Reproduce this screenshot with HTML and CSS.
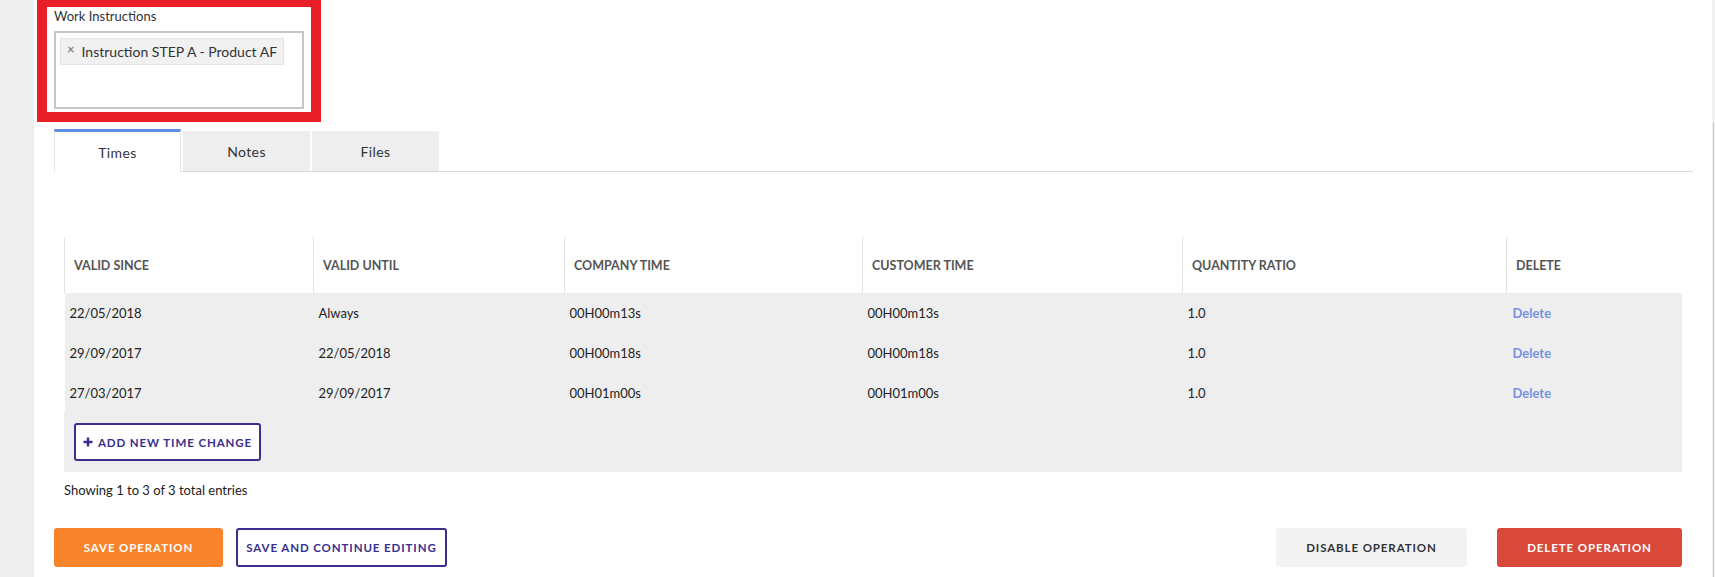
FILE: index.html
```html
<!DOCTYPE html>
<html>
<head>
<meta charset="utf-8">
<link rel="stylesheet" href="styles.css">
</head>
<body>
<div class="page">
  <div class="side-left"></div>
  <main class="main">
    <div class="field">
      <div class="highlight"></div>
      <label class="field-label">Work Instructions</label>
      <div class="select-box">
        <span class="tag"><span class="tag-x">×</span>Instruction STEP A - Product AF</span>
      </div>
    </div>

    <div class="tabs">
      <div class="tab active">Times</div>
      <div class="tab">Notes</div>
      <div class="tab">Files</div>
    </div>

    <div class="table-wrap">
      <table class="times">
        <colgroup>
          <col style="width:249px">
          <col style="width:251px">
          <col style="width:298px">
          <col style="width:320px">
          <col style="width:324px">
          <col>
        </colgroup>
        <thead>
          <tr>
            <th>VALID SINCE</th>
            <th>VALID UNTIL</th>
            <th>COMPANY TIME</th>
            <th>CUSTOMER TIME</th>
            <th>QUANTITY RATIO</th>
            <th>DELETE</th>
          </tr>
        </thead>
        <tbody>
          <tr>
            <td>22/05/2018</td><td>Always</td><td>00H00m13s</td><td>00H00m13s</td><td>1.0</td><td><a class="del">Delete</a></td>
          </tr>
          <tr>
            <td>29/09/2017</td><td>22/05/2018</td><td>00H00m18s</td><td>00H00m18s</td><td>1.0</td><td><a class="del">Delete</a></td>
          </tr>
          <tr>
            <td>27/03/2017</td><td>29/09/2017</td><td>00H01m00s</td><td>00H01m00s</td><td>1.0</td><td><a class="del">Delete</a></td>
          </tr>
        </tbody>
      </table>
      <div class="add-row">
        <button class="btn-add"><svg class="plus" viewBox="0 0 10 10" width="10" height="10"><path d="M5 0.5v9M0.5 5h9" stroke="#3a2f8f" stroke-width="2.4"/></svg>ADD NEW TIME CHANGE</button>
      </div>
      <div class="showing">Showing 1 to 3 of 3 total entries</div>
    </div>

    <div class="actions">
      <div class="actions-left">
        <button class="btn btn-orange">SAVE OPERATION</button>
        <button class="btn btn-outline">SAVE AND CONTINUE EDITING</button>
      </div>
      <div class="actions-right">
        <button class="btn btn-light">DISABLE OPERATION</button>
        <button class="btn btn-red">DELETE OPERATION</button>
      </div>
    </div>
  </main>
  <div class="side-right"><div class="scroll-line"></div></div>
</div>
</body>
</html>
```
FILE: styles.css
```css
* { box-sizing: border-box; }
html, body { margin: 0; padding: 0; }
body {
  font-family: "Lato", "Noto Sans", sans-serif;
  color: #222;
  background: #fff;
  width: 1715px;
  height: 577px;
  overflow: hidden;
}
.page {
  display: flex;
  height: 577px;
}
.side-left {
  width: 34px;
  background: #eeeeee;
  flex: none;
}
.side-right {
  width: 3px;
  flex: none;
  background: #f0f0f0;
  position: relative;
}
.scroll-line {
  position: absolute;
  left: 1px;
  top: 123px;
  bottom: 0;
  width: 1px;
  background: #c8c8c8;
}
.main {
  flex: 1;
  padding: 0 30px 0 20px;
}

/* field */
.field {
  position: relative;
  padding-top: 8px;
  width: 250px;
}
.highlight {
  position: absolute;
  left: -17px;
  top: -3px;
  width: 284px;
  height: 125px;
  border: 10px solid #e81f27;
  pointer-events: none;
}
.field-label {
  display: block;
  font-size: 13px;
  line-height: 16px;
  color: #333;
  margin-bottom: 7px;
}
.select-box {
  width: 250px;
  height: 78px;
  border: 2px solid #c6c6c6;
  padding: 5px 4px;
}
.tag {
  display: inline-flex;
  align-items: center;
  height: 27px;
  width: 224px;
  background: #f1f1f1;
  border: 1px solid #e4e4e4;
  padding-left: 6px;
  font-size: 14px;
  color: #333;
}
.tag-x {
  color: #888;
  font-weight: 700;
  font-size: 13px;
  margin-right: 7px;
  position: relative;
  top: -3px;
}

/* tabs */
.tabs {
  display: flex;
  gap: 2px;
  margin-top: 21px;
  margin-right: -11px;
  border-bottom: 1px solid #dcdcdc;
  height: 42px;
  align-items: flex-end;
}
.tab {
  width: 127px;
  height: 40px;
  background: #eeeeee;
  display: flex;
  align-items: center;
  justify-content: center;
  font-size: 14px;
  color: #333;
  letter-spacing: 0.4px;
}
.tab.active {
  height: 43px;
  margin-bottom: -1px;
  background: #fff;
  border-top: 3px solid #5b8ee0;
  border-left: 1px solid #e4e4e4;
  border-right: 1px solid #e4e4e4;
}

/* table */
.table-wrap {
  margin-left: 10px;
  margin-top: 65px;
}
.times {
  width: 100%;
  border-collapse: collapse;
  table-layout: fixed;
}
.times th {
  height: 56px;
  text-align: left;
  font-weight: 700;
  font-size: 12.5px;
  color: #555;
  padding: 0 0 0 9px;
  border-left: 1px solid #e2e2e2;
  background: #fff;
}
.times td {
  height: 40px;
  background: #eeeeee;
  font-size: 13px;
  color: #222;
  padding: 0 0 0 5px;
}
.times td:last-child { padding-left: 6px; }
.del {
  color: #7592dc;
  font-weight: 700;
  font-size: 13px;
}
.add-row {
  background: #eeeeee;
  padding: 10px 10px 11px;
}
.btn-add {
  height: 38px;
  width: 187px;
  background: #fff;
  border: 2px solid #3a2f8f;
  border-radius: 3px;
  color: #3a2f8f;
  font-family: "Lato", sans-serif;
  font-weight: 700;
  font-size: 11.5px;
  letter-spacing: 0.9px;
  display: flex;
  align-items: center;
  justify-content: center;
  gap: 5px;
  padding: 0;
}
.showing {
  font-size: 13px;
  line-height: 18px;
  margin-top: 9px;
  color: #222;
}

/* actions */
.actions {
  display: flex;
  justify-content: space-between;
  margin-top: 29px;
}
.actions-left, .actions-right {
  display: flex;
}
.actions-left { gap: 13px; }
.actions-right { gap: 30px; }
.btn {
  height: 39px;
  border-radius: 3px;
  border: none;
  font-family: "Lato", sans-serif;
  font-weight: 700;
  font-size: 11.5px;
  letter-spacing: 0.9px;
  padding: 0;
}
.btn-orange { width: 169px; background: #f7832a; color: #fff; }
.btn-outline { width: 211px; background: #fff; color: #3a2f8f; border: 2px solid #3a2f8f; }
.btn-light { width: 191px; background: #f3f3f3; color: #333; }
.btn-red { width: 185px; background: #d8493a; color: #fff; }
```
